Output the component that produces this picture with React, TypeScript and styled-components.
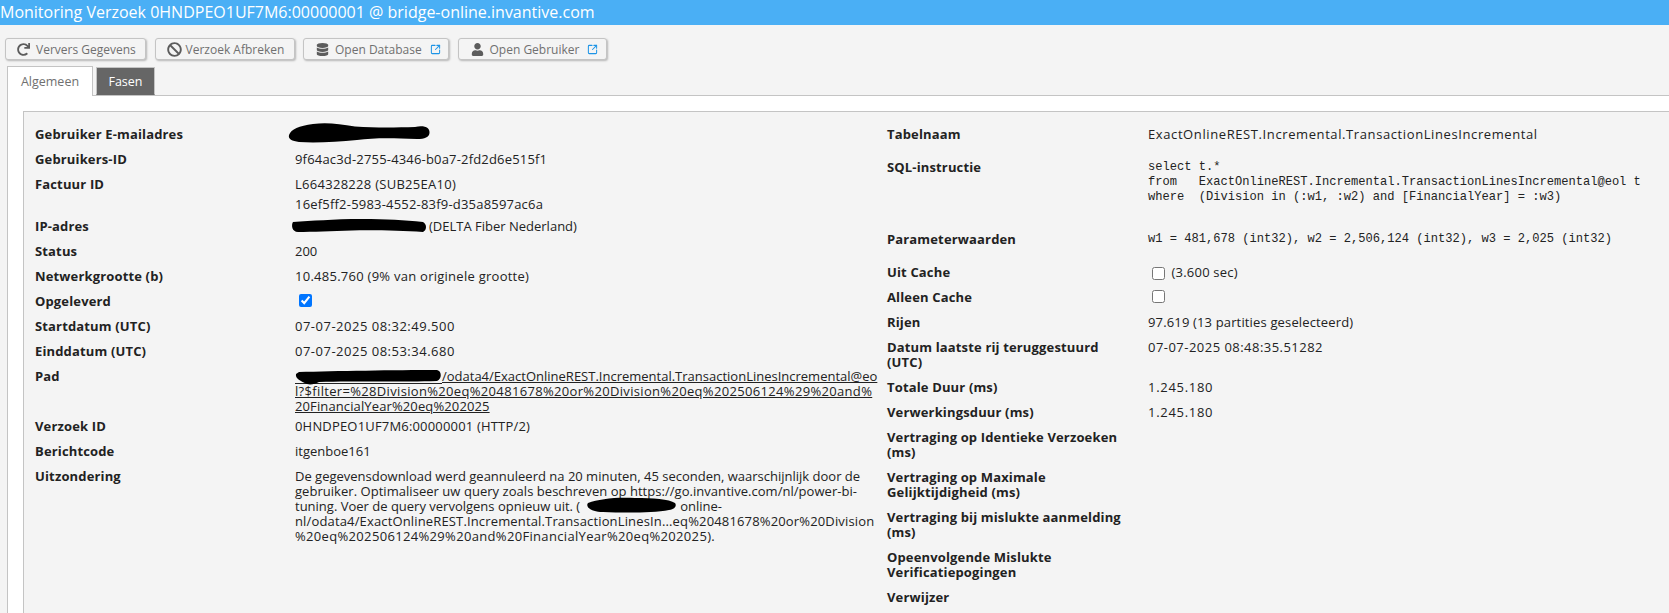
import React from "react";
import styled, { createGlobalStyle } from "styled-components";
import { FaBan, FaDatabase, FaRedo, FaUser } from "react-icons/fa";
import { SquareArrowOutUpRight } from "lucide-react";

const Global = createGlobalStyle`
  html, body { margin: 0; padding: 0; background: #f4f4f4; overflow: hidden; }
  body { font-family: "Open Sans", "Noto Sans", sans-serif; font-size: 13px; line-height: 15px; color: #222; }
`;

const Page = styled.div`
  position: relative;
  width: 1669px;
  height: 613px;
  overflow: hidden;
  background: #f4f4f4;
`;

const Header = styled.header`
  height: 25px;
  background: #4aaff5;
  color: #fff;
  font-size: 16px;
  line-height: 24px;
  white-space: nowrap;
`;

const Toolbar = styled.div`
  display: flex;
  gap: 8.5px;
  margin-top: 13px;
  padding-left: 5px;
`;

const ToolButton = styled.div<{ $w: number; $pad?: number; $gap?: number }>`
  box-sizing: border-box;
  display: flex;
  align-items: center;
  gap: ${(p) => p.$gap ?? 6}px;
  width: ${(p) => p.$w}px;
  height: 22px;
  padding-left: ${(p) => p.$pad ?? 12}px;
  border: 1px solid #c4c4c4;
  border-radius: 3px;
  background: #f4f4f4;
  box-shadow: 1px 1px 2px rgba(0, 0, 0, 0.25);
  color: #707070;
  font-size: 12px;
  white-space: nowrap;
  svg.main { color: #5c5c5c; flex: none; }
  svg.ext { color: #1d94e6; flex: none; margin-left: 2px; }
`;

const Tabs = styled.div`
  display: flex;
  gap: 3px;
  margin-top: 6px;
  padding-left: 7px;
  position: relative;
  z-index: 1;
`;

const Tab = styled.div<{ $active?: boolean }>`
  box-sizing: border-box;
  height: ${(p) => (p.$active ? 30 : 28)}px;
  margin-top: ${(p) => (p.$active ? 0 : 1)}px;
  width: ${(p) => (p.$active ? 86 : 59)}px;
  display: flex;
  align-items: center;
  justify-content: center;
  font-size: 12.5px;
  background: ${(p) => (p.$active ? "#fff" : "#666")};
  color: ${(p) => (p.$active ? "#707070" : "#fff")};
  border: 1px solid #c4c4c4;
  border-bottom: ${(p) => (p.$active ? "none" : "1px solid #666")};
`;

const TabPanel = styled.div`
  margin-left: 7px;
  margin-top: -1px;
  height: 530px;
  padding: 15px 0 0 15px;
  background: #fff;
  border-left: 1px solid #c4c4c4;
  border-top: 1px solid #c4c4c4;
`;

const Card = styled.div`
  box-sizing: border-box;
  width: 1800px;
  height: 520px;
  padding: 10px 11px;
  background: #f4f4f4;
  border-left: 1px solid #c4c4c4;
  border-top: 1px solid #c4c4c4;
  display: grid;
  grid-template-columns: 852px 1fr;
`;

const Column = styled.div`
  display: flex;
  flex-direction: column;
`;

const Row = styled.div<{ $pb?: number; $label?: number }>`
  display: grid;
  grid-template-columns: ${(p) => p.$label ?? 260}px 1fr;
  padding: 5px 0 ${(p) => p.$pb ?? 5}px;
`;

const Label = styled.div`
  font-weight: 700;
  color: #222;
  white-space: nowrap;
  letter-spacing: 0.15px;
`;

const Value = styled.div<{ $ls?: number }>`
  white-space: nowrap;
  color: #222;
  letter-spacing: ${(p) => p.$ls ?? 0}px;
`;

const Line = styled.div<{ $ls?: number; $mt?: number }>`
  letter-spacing: ${(p) => p.$ls ?? 0}px;
  margin-top: ${(p) => p.$mt ?? 0}px;
`;

const Spacer = styled.span<{ $w: number }>`
  display: inline-block;
  width: ${(p) => p.$w}px;
`;

const Link = styled.div<{ $ls?: number }>`
  text-decoration: underline;
  letter-spacing: ${(p) => p.$ls ?? 0}px;
`;

const LinkClip = styled.span<{ $w: number }>`
  display: inline-block;
  width: ${(p) => p.$w}px;
  border-bottom: 1px solid #222;
  height: 14px;
  vertical-align: top;
`;

const Mono = styled.div`
  font-family: "Liberation Mono", monospace;
  font-size: 12.08px;
  white-space: pre;
`;

const Check = styled.input.attrs({ type: "checkbox", readOnly: true })<{ $mt?: number }>`
  width: 13px;
  height: 13px;
  margin: ${(p) => p.$mt ?? 0}px 3px 0 4px;
  vertical-align: top;
`;

const Scribble = styled.svg<{ $x: number; $y: number }>`
  position: absolute;
  left: ${(p) => p.$x}px;
  top: ${(p) => p.$y}px;
  overflow: visible;
`;

const labelR = 261;

export default function App() {
  return (
    <Page>
      <Global />
      <Header>Monitoring Verzoek 0HNDPEO1UF7M6:00000001 @ bridge-online.invantive.com</Header>
      <Toolbar>
        <ToolButton $w={141} $pad={11}><FaRedo className="main" size={13} />Ververs Gegevens</ToolButton>
        <ToolButton $w={140} $pad={11} $gap={4}><FaBan className="main" size={15} />Verzoek Afbreken</ToolButton>
        <ToolButton $w={146}><FaDatabase className="main" size={13} />Open Database<SquareArrowOutUpRight className="ext" size={11} strokeWidth={2.2} /></ToolButton>
        <ToolButton $w={149}><FaUser className="main" size={13} />Open Gebruiker<SquareArrowOutUpRight className="ext" size={11} strokeWidth={2.2} /></ToolButton>
      </Toolbar>
      <Tabs>
        <Tab $active>Algemeen</Tab>
        <Tab>Fasen</Tab>
      </Tabs>
      <TabPanel>
        <Card>
          <Column>
            <Row><Label>Gebruiker E-mailadres</Label><Value>&nbsp;</Value></Row>
            <Row><Label>Gebruikers-ID</Label><Value $ls={0.18}>9f64ac3d-2755-4346-b0a7-2fd2d6e515f1</Value></Row>
            <Row $pb={2}><Label>Factuur ID</Label><Value><Line $ls={0.28}>L664328228 (SUB25EA10)</Line><Line $ls={0.2} $mt={5}>16ef5ff2-5983-4552-83f9-d35a8597ac6a</Line></Value></Row>
            <Row><Label>IP-adres</Label><Value><Spacer $w={134} />(DELTA Fiber Nederland)</Value></Row>
            <Row><Label>Status</Label><Value>200</Value></Row>
            <Row><Label>Netwerkgrootte (b)</Label><Value $ls={0.26}>10.485.760 (9% van originele grootte)</Value></Row>
            <Row><Label>Opgeleverd</Label><Value><Check defaultChecked /></Value></Row>
            <Row><Label>Startdatum (UTC)</Label><Value $ls={0.5}>07-07-2025 08:32:49.500</Value></Row>
            <Row><Label>Einddatum (UTC)</Label><Value $ls={0.5}>07-07-2025 08:53:34.680</Value></Row>
            <Row $pb={0}>
              <Label>Pad</Label>
              <Value>
                <LinkClip $w={147} /><Link as="span">/odata4/ExactOnlineREST.Incremental.TransactionLinesIncremental@eo</Link>
                <Link $ls={0.33}>l?$filter=%28Division%20eq%20481678%20or%20Division%20eq%202506124%29%20and%</Link>
                <Link $ls={0.12}>20FinancialYear%20eq%202025</Link>
              </Value>
            </Row>
            <Row><Label>Verzoek ID</Label><Value $ls={0.18}>0HNDPEO1UF7M6:00000001 (HTTP/2)</Value></Row>
            <Row><Label>Berichtcode</Label><Value>itgenboe161</Value></Row>
            <Row>
              <Label>Uitzondering</Label>
              <Value>
                <Line>De gegevensdownload werd geannuleerd na 20 minuten, 45 seconden, waarschijnlijk door de</Line>
                <Line $ls={0.04}>gebruiker. Optimaliseer uw query zoals beschreven op https://go.invantive.com/nl/power-bi-</Line>
                <Line>tuning. Voer de query vervolgens opnieuw uit. (<Spacer $w={100} />online-</Line>
                <Line $ls={0.15}>nl/odata4/ExactOnlineREST.Incremental.TransactionLinesIn...eq%20481678%20or%20Division</Line>
                <Line $ls={0.33}>%20eq%202506124%29%20and%20FinancialYear%20eq%202025).</Line>
              </Value>
            </Row>
          </Column>
          <Column>
            <Row $label={labelR} $pb={13}><Label>Tabelnaam</Label><Value $ls={0.6}>ExactOnlineREST.Incremental.TransactionLinesIncremental</Value></Row>
            <Row $label={labelR} $pb={22}>
              <Label>SQL-instructie</Label>
              <Mono>{"select t.*\nfrom   ExactOnlineREST.Incremental.TransactionLinesIncremental@eol t\nwhere  (Division in (:w1, :w2) and [FinancialYear] = :w3)"}</Mono>
            </Row>
            <Row $label={labelR} $pb={13}>
              <Label>Parameterwaarden</Label>
              <Mono>w1 = 481,678 (int32), w2 = 2,506,124 (int32), w3 = 2,025 (int32)</Mono>
            </Row>
            <Row $label={labelR}><Label>Uit Cache</Label><Value $ls={0.2}><Check $mt={2} /> (3.600 sec)</Value></Row>
            <Row $label={labelR}><Label>Alleen Cache</Label><Value><Check /></Value></Row>
            <Row $label={labelR}><Label>Rijen</Label><Value $ls={0.15}>97.619 (13 partities geselecteerd)</Value></Row>
            <Row $label={labelR}><Label>Datum laatste rij teruggestuurd<br />(UTC)</Label><Value $ls={0.47}>07-07-2025 08:48:35.51282</Value></Row>
            <Row $label={labelR}><Label>Totale Duur (ms)</Label><Value $ls={0.7}>1.245.180</Value></Row>
            <Row $label={labelR}><Label>Verwerkingsduur (ms)</Label><Value $ls={0.7}>1.245.180</Value></Row>
            <Row $label={labelR}><Label>Vertraging op Identieke Verzoeken<br />(ms)</Label><Value /></Row>
            <Row $label={labelR}><Label>Vertraging op Maximale<br />Gelijktijdigheid (ms)</Label><Value /></Row>
            <Row $label={labelR}><Label>Vertraging bij mislukte aanmelding<br />(ms)</Label><Value /></Row>
            <Row $label={labelR}><Label>Opeenvolgende Mislukte<br />Verificatiepogingen</Label><Value /></Row>
            <Row $label={labelR}><Label>Verwijzer</Label><Value /></Row>
          </Column>
        </Card>
      </TabPanel>
      <Scribble $x={289} $y={122} width="141" height="21" viewBox="0 0 141 21">
        <path d="M0 13C2 7 10 4 24 2C38 0 50 2 66 4.5C88 6 108 5.5 126 5C136 3 141 6 140.5 11C140 15 136 17 128 17C100 16 84 16 68 18C48 20 26 21 10 20C3 19 -1 17 0 13Z" fill="#000" />
      </Scribble>
      <Scribble $x={292} $y={219} width="135" height="14" viewBox="0 0 135 14">
        <path d="M1 3C20 2 40 0 70 0C95 0 112 1 131 3C135 5 135 11 131 13C110 12 88 11 60 11.5C40 12 20 13 6 13C0 13 -1 6 1 3Z" fill="#000" />
      </Scribble>
      <Scribble $x={295} $y={370} width="147" height="15" viewBox="0 0 147 15">
        <path d="M4 2C40 1 100 0 142 0C147 1 147 9 142 11C110 12 60 11 24 12C20 14 16 15 12 14C6 11 0 9 1 4Z" fill="#000" />
      </Scribble>
      <Scribble $x={585} $y={497} width="92" height="16" viewBox="0 0 92 16">
        <path d="M3 6C14 2 30 0 50 1C68 1 84 2 90 6C92 9 90 12 84 13C68 16 40 16 18 15C6 15 0 10 3 6Z" fill="#000" />
      </Scribble>
    </Page>
  );
}
